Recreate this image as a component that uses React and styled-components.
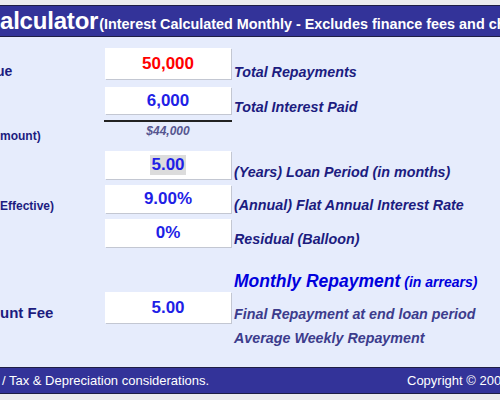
import React from "react";
import styled, { createGlobalStyle } from "styled-components";

const GlobalStyle = createGlobalStyle`
  body {
    margin: 0;
    background: #ececee;
    font-family: "Liberation Sans", Arial, sans-serif;
    overflow: hidden;
  }
`;

const Page = styled.div`
  width: 500px;
  height: 400px;
  padding-top: 5px;
  box-sizing: border-box;
  overflow: hidden;
`;

const Header = styled.div`
  height: 30px;
  border-top: 1px solid #1e1e44;
  border-bottom: 1px solid #1e1e44;
  background: #333399;
  color: #ffffff;
  display: flex;
  align-items: baseline;
  white-space: nowrap;
  overflow: hidden;
  font-weight: bold;

  .title {
    font-size: 24px;
    line-height: 30px;
    letter-spacing: -0.2px;
  }

  .sub {
    font-size: 14.4px;
    margin-left: 1px;
  }
`;

const Body = styled.div`
  height: 330px;
  background: #e6ecfc;
  padding-top: 11px;
  box-sizing: border-box;
`;

const Row = styled.div`
  display: grid;
  grid-template-columns: 105px 126px 1fr;
  height: ${(p) => p.$h}px;
  margin-top: ${(p) => p.$mt || 0}px;
`;

const LeftLabel = styled.div`
  align-self: end;
  font-size: ${(p) => p.$size || 14}px;
  line-height: ${(p) => (p.$size || 14) + 2}px;
  margin-bottom: ${(p) => p.$mb || 0}px;
  margin-left: ${(p) => p.$shift || 0}px;
  font-weight: bold;
  color: #1c1c80;
  white-space: nowrap;
`;

const Box = styled.div`
  background: #ffffff;
  box-shadow: 1px 1px 0 #c3c7d2;
  display: flex;
  align-items: center;
  justify-content: center;
  font-size: 17px;
  font-weight: bold;
  color: ${(p) => p.$color || "#1f1fe6"};

  .sel {
    background: #dcdcdc;
    padding: 0 1px;
  }
`;

const RightLabel = styled.div`
  align-self: end;
  padding-left: 3px;
  font-size: 14.3px;
  line-height: 16px;
  margin-bottom: ${(p) => p.$mb || 0}px;
  font-weight: bold;
  font-style: italic;
  color: ${(p) => (p.$soft ? "#3c3c8c" : "#1c1c80")};
  white-space: nowrap;
`;

const Rule = styled.div`
  margin: 6px 0 0 104px;
  width: 128px;
  height: 2px;
  background: #222222;
`;

const SubLabel = styled.div`
  padding-top: ${(p) => p.$pt}px;
  font-size: 12px;
  line-height: 14px;
  font-weight: bold;
  color: #1c1c80;
  white-space: nowrap;
`;

const Amount = styled.div`
  padding-top: 2px;
  text-align: center;
  font-size: 12px;
  line-height: 14px;
  font-weight: bold;
  font-style: italic;
  color: #55558f;
`;

const Highlight = styled.div`
  align-self: end;
  padding-left: 3px;
  line-height: 20px;
  font-weight: bold;
  font-style: italic;
  color: #0000dd;
  white-space: nowrap;

  .big {
    font-size: 17.5px;
  }

  .small {
    font-size: 14px;
    margin-left: 4px;
  }
`;

const Footer = styled.div`
  height: 25px;
  border-top: 1px solid #1e1e44;
  border-bottom: 1px solid #1e1e44;
  background: #333399;
  color: #ffffff;
  font-size: 13px;
  display: grid;
  grid-template-columns: 407px 1fr;
  align-items: center;
  white-space: nowrap;
  overflow: hidden;

  span {
    padding-left: 2px;
  }
`;

const App = () => {
  return (
    <>
      <GlobalStyle />
      <Page>
        <Header>
          <span className="title">alculator</span>
          <span className="sub">
            (Interest Calculated Monthly - Excludes finance fees and charges)
          </span>
        </Header>
        <Body>
          <Row $h={31}>
            <LeftLabel $shift={-4}>ue</LeftLabel>
            <Box $color="#ff0000">50,000</Box>
            <RightLabel $mb={-1}>Total Repayments</RightLabel>
          </Row>
          <Row $h={27} $mt={8}>
            <div />
            <Box>6,000</Box>
            <RightLabel $mb={-1}>Total Interest Paid</RightLabel>
          </Row>
          <Rule />
          <Row $h={29}>
            <SubLabel $pt={7}>mount)</SubLabel>
            <Amount>$44,000</Amount>
            <div />
          </Row>
          <Row $h={28}>
            <div />
            <Box>
              <span className="sel">5.00</span>
            </Box>
            <RightLabel $mb={-1}>(Years) Loan Period (in months)</RightLabel>
          </Row>
          <Row $h={28} $mt={6}>
            <LeftLabel $size={12} $mb={0}>Effective)</LeftLabel>
            <Box>9.00%</Box>
            <RightLabel $mb={0}>(Annual) Flat Annual Interest Rate</RightLabel>
          </Row>
          <Row $h={28} $mt={6}>
            <div />
            <Box>0%</Box>
            <RightLabel $mb={0}>Residual (Balloon)</RightLabel>
          </Row>
          <Row $h={45}>
            <div />
            <div />
            <Highlight>
              <span className="big">Monthly Repayment</span>
              <span className="small">(in arrears)</span>
            </Highlight>
          </Row>
          <Row $h={31}>
            <LeftLabel $size={15} $mb={2}>unt Fee</LeftLabel>
            <Box>5.00</Box>
            <RightLabel $soft $mb={1}>Final Repayment at end loan period</RightLabel>
          </Row>
          <Row $h={23}>
            <div />
            <div />
            <RightLabel $soft>Average Weekly Repayment</RightLabel>
          </Row>
        </Body>
        <Footer>
          <span>/ Tax &amp; Depreciation considerations.</span>
          <div>Copyright © 2007</div>
        </Footer>
      </Page>
    </>
  );
};

export default App;
